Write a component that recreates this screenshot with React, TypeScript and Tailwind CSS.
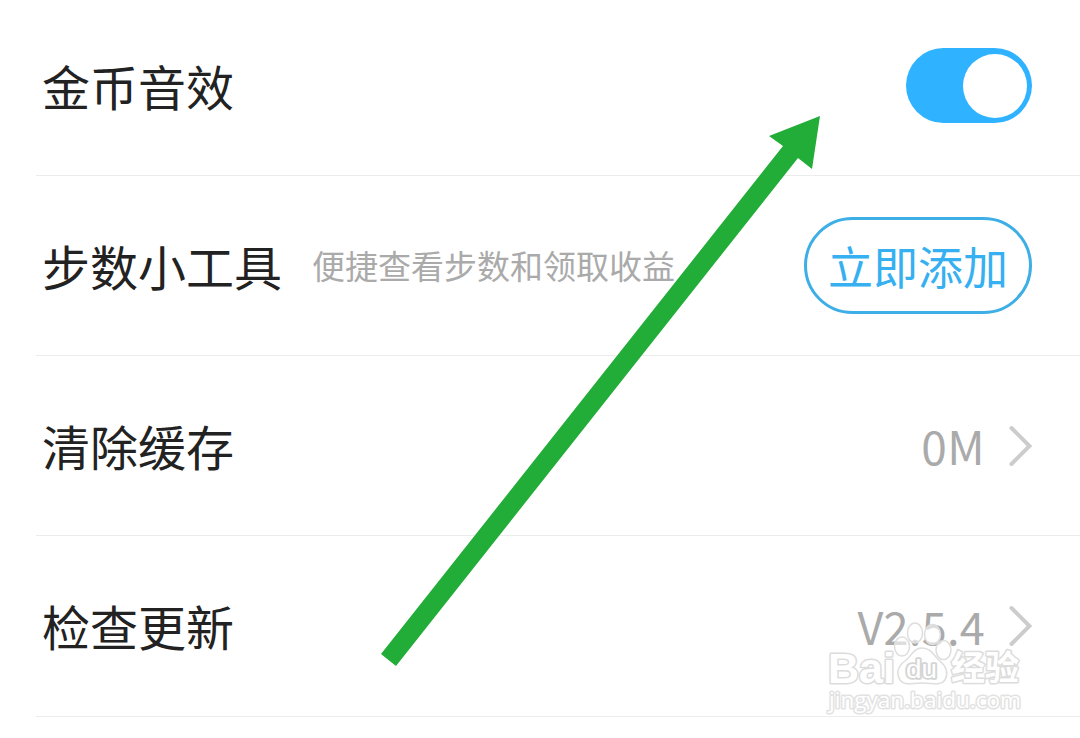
import React from "react";

function Row({ children, className = "" }: { children: React.ReactNode; className?: string }) {
  return <section className={`ml-9 flex items-center border-b border-[#ececec] pl-[6px] pr-12 ${className}`}>{children}</section>;
}

function Title({ children }: { children: React.ReactNode }) {
  return <h2 className="pb-[2px] text-[48px] leading-[60px] text-[#222222]">{children}</h2>;
}

function Chevron() {
  return (
    <svg className="ml-[21px] h-[44px] w-[26px]" viewBox="0 0 26 44" fill="none">
      <path d="M5.5 4 23.5 22 5.5 40" stroke="#cccccc" strokeWidth="4" strokeLinecap="round" />
    </svg>
  );
}

function Watermark() {
  return (
    <svg className="absolute left-[820px] top-[615px] h-[110px] w-[220px]" viewBox="820 615 220 110">
      <g fill="#ffffff" fillOpacity="0.6" stroke="#dedede" strokeWidth="1.5">
        <ellipse cx="902" cy="646.5" rx="7.5" ry="9.5" />
        <ellipse cx="915" cy="633" rx="7.5" ry="10" />
        <ellipse cx="932.5" cy="634.5" rx="8" ry="10" />
        <ellipse cx="943.5" cy="650" rx="7.5" ry="9.5" />
        <path fillOpacity="1" d="M922 648c-9 0-11 9-17 13-8 6-9 12-5 19 4 6 11 3 22 3s19 3 23-3c3-6 2-13-5-19-6-5-9-13-18-13Z" />
      </g>
      <g fill="#ffffff" stroke="#dcdcdc" strokeWidth="3" strokeLinejoin="round" paintOrder="stroke" fontFamily="Liberation Sans, sans-serif" fontWeight="700">
        <text x="828" y="682.5" fontSize="42" textLength="67" lengthAdjust="spacingAndGlyphs">Bai</text>
        <text x="906" y="678" fontSize="25" fontWeight="400" strokeWidth="3.5" stroke="#d4d4d4" textLength="31" lengthAdjust="spacingAndGlyphs">du</text>
        <text x="951" y="680" fontSize="34" fontFamily="Noto Sans CJK SC, sans-serif">经验</text>
        <text x="829" y="708" fontSize="22" fontWeight="400" fontFamily="Open Sans, sans-serif" textLength="192" stroke="#e2e2e2" strokeWidth="3" lengthAdjust="spacingAndGlyphs">jingyan.baidu.com</text>
      </g>
    </svg>
  );
}

export default function App() {
  return (
    <main className="relative h-[738px] w-[1080px] overflow-hidden bg-white font-['Noto_Sans_CJK_SC',sans-serif]">
      <Row className="h-[176px] pb-[4px]">
        <Title>金币音效</Title>
        <button className="ml-auto flex h-[75px] w-[126px] items-center justify-end rounded-full bg-[#2fb2ff] pr-[5px]" aria-label="金币音效">
          <span className="size-[64px] rounded-full bg-white" />
        </button>
      </Row>
      <Row className="h-[180px]">
        <Title>步数小工具</Title>
        <p className="ml-[30px] pt-px text-[33px] text-[#aaaaaa]">便捷查看步数和领取收益</p>
        <button className="ml-auto h-[97px] w-[228px] rounded-full border-[3px] border-[#3eaee6] pt-px text-[45px] leading-[60px] text-[#36b0f0]">立即添加</button>
      </Row>
      <Row className="h-[180px]">
        <Title>清除缓存</Title>
        <span className="ml-auto text-[46px] tracking-[0.4px] text-[#aaaaaa]">0M</span>
        <Chevron />
      </Row>
      <Row className="h-[181px]">
        <Title>检查更新</Title>
        <span className="ml-auto text-[45px] tracking-[0.3px] text-[#aaaaaa]">V2.5.4</span>
        <Chevron />
      </Row>
      <svg className="absolute left-0 top-0 h-[738px] w-[1080px]" viewBox="0 0 1080 738">
        <path d="M820 116 812 169 798 158 396 666 381 654 783 146 769 136Z" fill="#22ac38" />
      </svg>
      <Watermark />
    </main>
  );
}
